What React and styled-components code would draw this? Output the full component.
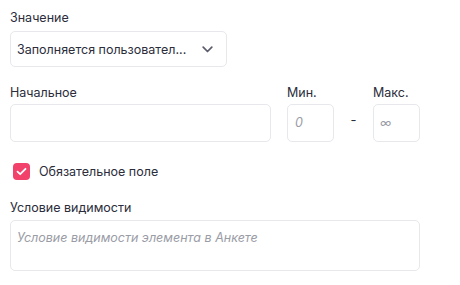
import React from "react";
import styled, { createGlobalStyle } from "styled-components";

const GlobalStyle = createGlobalStyle`
  body {
    margin: 0;
    background: #ffffff;
    font-family: Inter, "Noto Sans", sans-serif;
    color: #2b2d3b;
  }
`;

const Form = styled.div`
  width: 410px;
  padding: 10px 0 0 10px;
  display: flex;
  flex-direction: column;
`;

const Field = styled.div`
  display: flex;
  flex-direction: column;
  margin-left: ${props => props.left || 0}px;
`;

const Label = styled.label`
  font-size: 12.5px;
  line-height: 16px;
  color: #2b2d3b;
  margin-bottom: ${props => props.gap || 5}px;
`;

const Box = styled.div`
  box-sizing: border-box;
  width: ${props => props.width}px;
  height: ${props => props.height || 38}px;
  border: 1px solid #e7e8ec;
  border-radius: 5px;
  background: #fff;
  display: flex;
  align-items: ${props => (props.top ? "flex-start" : "center")};
  padding: ${props => (props.top ? "9px 6px" : "0 13px 0 6px")};
  font-size: 12.5px;
`;

const SelectText = styled.span`
  flex: 1;
  color: #2b2d3b;
`;

const Placeholder = styled.span`
  font-style: italic;
  line-height: 16px;
  color: #9a9ca6;
  font-size: ${props => props.size || 12.5}px;
  margin-left: ${props => props.indent || 0}px;
`;

const Row = styled.div`
  display: flex;
  align-items: flex-start;
  margin-top: 18px;
`;

const Dash = styled.div`
  width: 39px;
  text-align: center;
  font-size: 13px;
  padding-top: 27px;
  color: #2b2d3b;
`;

const CheckRow = styled.div`
  display: flex;
  align-items: center;
  gap: 9px;
  margin: 21px 0 0 3px;
  font-size: 12.5px;
  line-height: 17px;
`;

const Check = styled.span`
  width: 17px;
  height: 17px;
  border-radius: 4px;
  background: #f2416b;
  display: flex;
  align-items: center;
  justify-content: center;
`;

const VisibilityField = styled(Field)`
  margin-top: 20px;
`;

const Chevron = () => (
  <svg width="11" height="7" viewBox="0 0 11 7" fill="none">
    <path d="M1.2 1.2L5.5 5.5l4.3-4.3" stroke="#5a5c6b" strokeWidth="1.7" strokeLinecap="round" strokeLinejoin="round" />
  </svg>
);

const App = () => (
  <>
    <GlobalStyle />
    <Form>
      <Field>
        <Label>Значение</Label>
        <Box width={217} height={36}>
          <SelectText>Заполняется пользовател...</SelectText>
          <Chevron />
        </Box>
      </Field>
      <Row>
        <Field>
          <Label gap={3}>Начальное</Label>
          <Box width={261} />
        </Field>
        <Field left={16}>
          <Label gap={3}>Мин.</Label>
          <Box width={47}>
            <Placeholder indent={1}>0</Placeholder>
          </Box>
        </Field>
        <Dash>-</Dash>
        <Field>
          <Label gap={3}>Макс.</Label>
          <Box width={47}>
            <Placeholder size={12}>∞</Placeholder>
          </Box>
        </Field>
      </Row>
      <CheckRow>
        <Check>
          <svg width="11" height="9" viewBox="0 0 11 9" fill="none">
            <path d="M1.5 4.6L4.2 7.2 9.5 1.8" stroke="#fff" strokeWidth="1.8" strokeLinecap="round" strokeLinejoin="round" />
          </svg>
        </Check>
        Обязательное поле
      </CheckRow>
      <VisibilityField>
        <Label gap={4}>Условие видимости</Label>
        <Box width={410} height={51} top>
          <Placeholder>Условие видимости элемента в Анкете</Placeholder>
        </Box>
      </VisibilityField>
    </Form>
  </>
);

export default App;
